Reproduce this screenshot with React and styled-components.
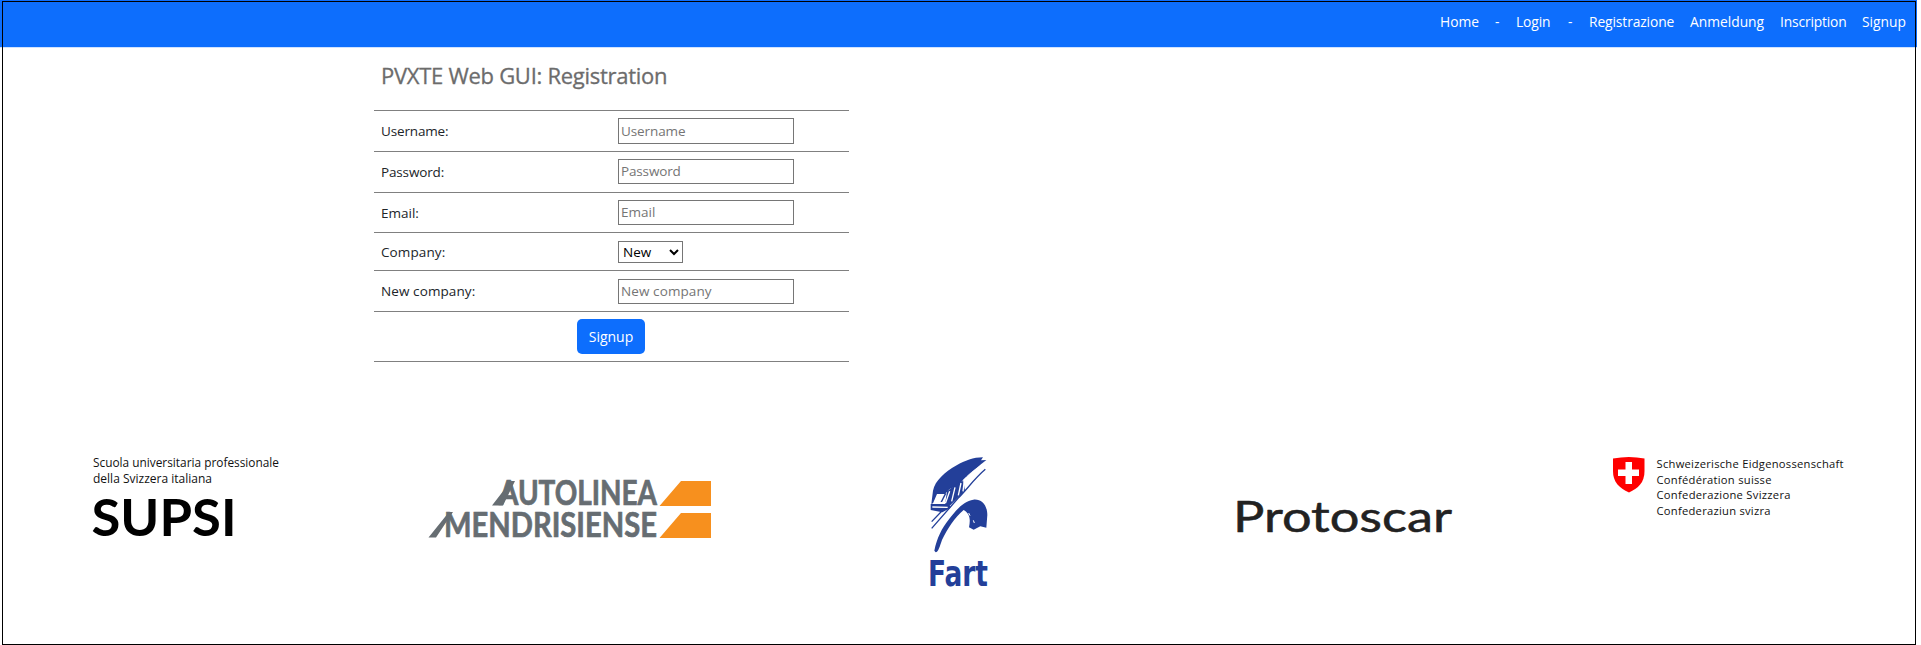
import React from "react";
import styled, { createGlobalStyle } from "styled-components";

const GlobalStyle = createGlobalStyle`
  * { box-sizing: border-box; }
  html, body { margin: 0; background: #fff; overflow: hidden; }
  body { font-family: "Open Sans", "Noto Sans", sans-serif; font-size: 14px; color: #212529; }
`;

const Page = styled.div`
  position: relative;
  width: 1917px;
  height: 645px;
`;

const Frame = styled.div`
  position: absolute;
  inset: 1px 1px 0 2px;
  border: 1px solid #000;
  pointer-events: none;
`;

const Navbar = styled.nav`
  display: flex;
  justify-content: flex-end;
  height: 48px;
  padding: 11px 10px 0 0;
  gap: 16px;
  background: #0d6efd;
  border-bottom: 1px solid #cfe2ff;
`;

const NavItem = styled.a`
  width: ${(p) => p.$width}px;
  line-height: 22px;
  white-space: nowrap;
  color: #fff;
  font-size: 13.8px;
  font-weight: 500;
  letter-spacing: ${(p) => p.$track || 0}px;
`;

const Form = styled.form`
  width: 475px;
  margin-left: 374px;
`;

const Title = styled.h1`
  height: 63px;
  margin: 0;
  padding: 11px 0 0 7px;
  border-bottom: 1px solid #808080;
  font-size: 22px;
  font-weight: 500;
  line-height: 32px;
  letter-spacing: -0.28px;
  color: #6c6c6c;
  -webkit-text-stroke: 0.3px #6c6c6c;
  white-space: nowrap;
`;

const Row = styled.div`
  display: flex;
  align-items: flex-start;
  justify-content: ${(p) => (p.$center ? "center" : "flex-start")};
  height: ${(p) => p.$height}px;
  padding: ${(p) => p.$top || 7}px 7px 0;
  border-bottom: 1px solid #808080;
`;

const Label = styled.label`
  width: 237px;
  line-height: ${(p) => p.$line || 26}px;
  font-size: 13.5px;
  letter-spacing: ${(p) => p.$track || 0}px;
`;

const Input = styled.input`
  width: 176px;
  height: ${(p) => p.$height || 25}px;
  margin: 0;
  padding: 0 2px 1px;
  border: 1px solid #767676;
  border-radius: 0;
  font: inherit;
  font-size: 13.5px;
  letter-spacing: ${(p) => p.$track || 0}px;
  &::placeholder { color: #757575; }
`;

const Select = styled.select`
  width: 65px;
  height: 22px;
  margin: 0;
  padding: 0;
  border: 1px solid #767676;
  border-radius: 0;
  background: #fff;
  font: inherit;
  font-size: 13.5px;
  color: #000;
`;

const SubmitButton = styled.button`
  width: 68px;
  height: 35px;
  margin-right: 1px;
  padding: 0;
  border: 0;
  border-radius: 5px;
  background: #0d6efd;
  color: #fff;
  font: inherit;
  font-weight: 500;
`;

const Partners = styled.footer`
  display: grid;
  grid-template-columns: 335px 490px 300px 380px 260px;
  height: 160px;
  margin: 78px 0 0 90px;
`;

const Logo = styled.svg`
  display: block;
  width: 100%;
  height: 160px;
  overflow: visible;
`;

function Wordmark({ children, x, y, width, size, weight = 400, family = "Open Sans", adjust = "spacingAndGlyphs", ...rest }) {
  return (
    <text x={x} y={y} textLength={width} lengthAdjust={adjust} fontSize={size}
      fontWeight={weight} fontFamily={`"${family}", sans-serif`} {...rest}>
      {children}
    </text>
  );
}

const SupsiLogo = () => (
  <Logo viewBox="90 440 335 160">
    <Wordmark x={93} y={466.5} width={186} size={12.4} fill="#111">Scuola universitaria professionale</Wordmark>
    <Wordmark x={93} y={483} width={119} size={12.4} fill="#111">della Svizzera italiana</Wordmark>
    <Wordmark x={91.5} y={536} width={145} size={52} weight={700} family="Lato" fill="#000">SUPSI</Wordmark>
  </Logo>
);

const AutolineaLogo = () => (
  <Logo viewBox="425 440 490 160">
    <g fill="#666d72">
      <g stroke="#666d72" strokeWidth="0.7">
        <Wordmark x={499} y={505} width={158} size={34.5} weight={700} family="Lato">AUTOLINEA</Wordmark>
        <Wordmark x={444} y={537} width={213} size={34.5} weight={700} family="Lato">MENDRISIENSE</Wordmark>
      </g>
      <path d="M492 505.5 L511 481 H515 L503 505.5 Z M428.5 537.5 L449 512 H453 L436 537.5 Z" />
    </g>
    <path fill="#f7901e" d="M681 481 H711 V506 H659.5 Z M681 513 H711 V538 H659.5 Z" />
  </Logo>
);

const FartLogo = () => (
  <Logo viewBox="915 440 300 160">
    <g transform="translate(925 450) scale(0.3333)">
      <g fill="#233f99">
        <path d="M24 122 C30 92 60 66 95 46 C120 32 145 22 174 22 L168 31 L184 30 C160 48 137 69 114 90 C98 104 90 110 73 118 L60 132 L36 132 L24 160 L19 162 Z" />
        <path d="M17 162 L74 162 L76 174 L52 187 L17 180 Z" />
        <path d="M66 124 L114 88 L120 122 L100 142 L76 166 L60 164 Z" />
        <path d="M28 302 C36 265 50 235 72 208 C90 184 116 152 145 149 C169 146 187 165 187 195 L184 233 L166 229 L146 239 L132 232 C136 212 137 192 116 180 C89 203 68 235 51 270 C45 287 40 307 32 307 Z" />
      </g>
      <g fill="none" stroke="#233f99" strokeWidth="4">
        <path d="M181 58 C150 84 125 119 99 145 L20 235 M50 184 L20 215 M62 130 L48 158" />
      </g>
      <g fill="none" stroke="#fff" strokeWidth="4">
        <path d="M30 158 L62 158 L74 124 M22 171 L68 172 M90 112 L80 154 M108 99 L100 136 M118 92 L114 124" />
        <path d="M179 41 C150 56 127 77 112 94" strokeWidth="2.5" />
        <path d="M131 189 L135 197 M145 211 L148 219" strokeWidth="3" />
      </g>
    </g>
    <Wordmark x={928} y={586} width={60} size={35} weight={700} family="DejaVu Sans" fill="#233f99">Fart</Wordmark>
  </Logo>
);

const ProtoscarLogo = () => (
  <Logo viewBox="1215 440 380 160">
    <Wordmark x={1233} y={532} width={219} size={43} family="Lato"
      fill="#222" stroke="#222" strokeWidth="0.5" strokeLinejoin="round">Protoscar</Wordmark>
  </Logo>
);

const SwissLogo = () => (
  <Logo viewBox="1595 440 260 160">
    <path fill="#f00" d="M1613 458.5 Q1629 455.5 1644.5 458.5 V471 C1644.5 483 1638 488 1629 492.5 C1619 488 1613 482 1613 471 Z" />
    <path fill="#fff" d="M1625.5 462 H1632 V469.5 H1639 V476 H1632 V484 H1625.5 V476 H1618 V469.5 H1625.5 Z" />
    <g fill="#111">
      <Wordmark x={1656.5} y={468} width={187} size={11.2} adjust="spacing">Schweizerische Eidgenossenschaft</Wordmark>
      <Wordmark x={1656.5} y={483.5} width={115} size={11.2} adjust="spacing">Confédération suisse</Wordmark>
      <Wordmark x={1656.5} y={499} width={134} size={11.2} adjust="spacing">Confederazione Svizzera</Wordmark>
      <Wordmark x={1656.5} y={514.5} width={114} size={11.2} adjust="spacing">Confederaziun svizra</Wordmark>
    </g>
  </Logo>
);

export default function App() {
  return (
    <Page>
      <GlobalStyle />
      <Navbar>
        <NavItem $width={39}>Home</NavItem>
        <NavItem $width={5}>-</NavItem>
        <NavItem $width={36} $track={-0.1}>Login</NavItem>
        <NavItem $width={5}>-</NavItem>
        <NavItem $width={85} $track={-0.1}>Registrazione</NavItem>
        <NavItem $width={74}>Anmeldung</NavItem>
        <NavItem $width={66} $track={-0.15}>Inscription</NavItem>
        <NavItem $width={45}>Signup</NavItem>
      </Navbar>
      <Form>
        <Title>PVXTE Web GUI: Registration</Title>
        <Row $height={41}>
          <Label $track={-0.15}>Username:</Label>
          <Input $height={26} placeholder="Username" $track={-0.1} />
        </Row>
        <Row $height={41}>
          <Label $track={-0.15}>Password:</Label>
          <Input type="password" placeholder="Password" $track={-0.15} />
        </Row>
        <Row $height={40}>
          <Label>Email:</Label>
          <Input placeholder="Email" />
        </Row>
        <Row $height={38} $top={8}>
          <Label $line={22} $track={0.1}>Company:</Label>
          <Select defaultValue="New"><option>New</option></Select>
        </Row>
        <Row $height={41} $top={8}>
          <Label $line={24} $track={0.1}>New company:</Label>
          <Input placeholder="New company" $track={0.1} />
        </Row>
        <Row $height={50} $center>
          <SubmitButton type="button">Signup</SubmitButton>
        </Row>
      </Form>
      <Partners>
        <SupsiLogo />
        <AutolineaLogo />
        <FartLogo />
        <ProtoscarLogo />
        <SwissLogo />
      </Partners>
      <Frame />
    </Page>
  );
}
